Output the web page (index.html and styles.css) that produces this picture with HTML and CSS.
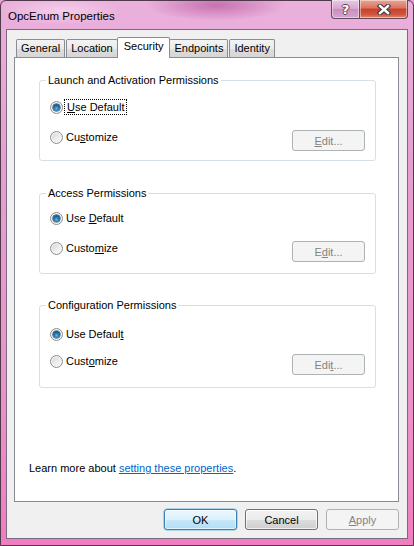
FILE: index.html
```html
<!DOCTYPE html>
<html lang="en">
<head>
<meta charset="UTF-8">
<meta name="viewport" content="width=device-width, initial-scale=1.0">
<title>OpcEnum Properties</title>
<link rel="stylesheet" href="styles.css">
</head>
<body>
<div class="window">
  <div class="titlebar">
    <span class="title">OpcEnum Properties</span>
    <div class="caption-btns">
      <span class="cap-btn help">?</span>
      <span class="cap-btn close">
        <svg width="14" height="11" viewBox="0 0 14 11">
          <path d="M3 2 L11 9 M11 2 L3 9" stroke="#4a3a48" stroke-width="4.6" stroke-linecap="square" fill="none"/>
          <path d="M3 2 L11 9 M11 2 L3 9" stroke="#fff" stroke-width="2.4" stroke-linecap="square" fill="none"/>
        </svg>
      </span>
    </div>
  </div>

  <div class="client">
    <div class="tabs">
      <span class="tab">General</span>
      <span class="tab">Location</span>
      <span class="tab active">Security</span>
      <span class="tab">Endpoints</span>
      <span class="tab">Identity</span>
    </div>

    <div class="panel">
      <fieldset class="group group-launch">
        <legend>Launch and Activation Permissions</legend>
        <div class="row">
          <label class="radio checked"><span class="dot"></span><span class="text focus"><u>U</u>se Default</span></label>
        </div>
        <div class="row">
          <label class="radio"><span class="dot"></span><span class="text">Cu<u>s</u>tomize</span></label>
          <button class="btn edit" disabled><u>E</u>dit...</button>
        </div>
      </fieldset>

      <fieldset class="group group-access">
        <legend>Access Permissions</legend>
        <div class="row">
          <label class="radio checked"><span class="dot"></span><span class="text">Use <u>D</u>efault</span></label>
        </div>
        <div class="row">
          <label class="radio"><span class="dot"></span><span class="text">Custo<u>m</u>ize</span></label>
          <button class="btn edit" disabled>E<u>d</u>it...</button>
        </div>
      </fieldset>

      <fieldset class="group group-config">
        <legend>Configuration Permissions</legend>
        <div class="row">
          <label class="radio checked"><span class="dot"></span><span class="text">Use Defaul<u>t</u></span></label>
        </div>
        <div class="row">
          <label class="radio"><span class="dot"></span><span class="text">Cust<u>o</u>mize</span></label>
          <button class="btn edit" disabled>Edi<u>t</u>...</button>
        </div>
      </fieldset>

      <p class="learn">Learn more about <a href="#">setting these properties</a>.</p>
    </div>

    <div class="actions">
      <button class="btn default">OK</button>
      <button class="btn">Cancel</button>
      <button class="btn" disabled><u>A</u>pply</button>
    </div>
  </div>
</div>
</body>
</html>
```

FILE: styles.css
```css
*{
  margin: 0;
  padding: 0;
  box-sizing: border-box;
}
body{
  background-color: #e99fd3;
  font-family: "Liberation Sans", Arial, sans-serif;
  font-size: 11px;
  color: #000;
}
.window{
  width: 414px;
  height: 546px;
  border: 1px solid #4f3a4c;
  border-radius: 6px 6px 0 0;
  display: flex;
  flex-direction: column;
  background:
    radial-gradient(ellipse 70px 16px at 215px 4px, rgba(170, 60, 140, .55), rgba(170, 60, 140, 0)),
    radial-gradient(ellipse 60px 14px at 60px 10px, rgba(255, 235, 250, .5), rgba(255, 235, 250, 0)),
    linear-gradient(180deg, #eab1dc 0%, #e69ed2 30%, #ea94cc 70%, #f07dc1 100%);
}

/* title bar */
.titlebar{
  height: 28px;
  display: flex;
  justify-content: space-between;
  align-items: flex-start;
}
.title{
  padding: 8px 0 0 7px;
  font-size: 11.5px;
  line-height: 14px;
  color: #000;
}
.caption-btns{
  display: flex;
  margin-right: 5px;
  margin-top: -1px;
}
.cap-btn{
  height: 19px;
  display: flex;
  align-items: center;
  justify-content: center;
  border: 1px solid #5f4a5e;
  border-top: 0;
  box-shadow: inset 0 0 0 1px rgba(255, 255, 255, .45);
}
.help{
  width: 28px;
  border-right: 0;
  border-radius: 0 0 0 4px;
  background: linear-gradient(180deg, #e7c9e2 0%, #d6a6cd 50%, #c98dbf 51%, #d7a5cf 100%);
  color: #fff;
  font: bold 13px "DejaVu Sans", sans-serif;
  text-shadow: -1px 0 #5a4658, 1px 0 #5a4658, 0 -1px #5a4658, 0 1px #5a4658;
}
.close{
  width: 49px;
  border-radius: 0 0 4px 0;
  background: linear-gradient(180deg, #e9a593 0%, #d8735f 45%, #c6412b 50%, #d0553c 80%, #e58a6b 100%);
}

/* client area */
.client{
  flex: 1;
  margin: 0 5px 6px 5px;
  border: 1px solid #7d6a7c;
  background-color: #f0f0f0;
  display: flex;
  flex-direction: column;
  padding-top: 7px;
}
.tabs{
  display: flex;
  height: 20px;
  margin-left: 9px;
  position: relative;
  z-index: 1;
}
.tab{
  margin-top: 2px;
  height: 18px;
  padding: 0 4px;
  line-height: 16px;
  border: 1px solid #898c95;
  border-bottom: 0;
  border-radius: 2px 2px 0 0;
  margin-right: 1px;
  background: linear-gradient(180deg, #f3f3f3 0%, #ebebeb 50%, #dedede 51%, #d6d6d6 100%);
}
.tab.active{
  margin: 0 -1px 0 -2px;
  height: 21px;
  padding: 0 6px;
  line-height: 17px;
  background: #fff;
}
.panel{
  flex: 1;
  margin: 0 8px 0 7px;
  background-color: #fff;
  border: 1px solid #898c95;
  display: flex;
  flex-direction: column;
}

/* group boxes */
.group{
  margin: 15px 22px 0 24px;
  border: 1px solid #d5dfe5;
  border-radius: 3px;
  padding: 12px 10px 9px 10px;
}
.group legend{
  margin-left: -4px;
  padding: 0 2px;
  line-height: 14px;
}
.group-access{
  margin-top: 25px;
  padding-top: 10px;
  padding-bottom: 11px;
}
.group-config{
  margin-top: 24px;
  padding-top: 14px;
  padding-bottom: 12px;
}
.row{
  display: flex;
  justify-content: space-between;
  align-items: flex-start;
}
.row + .row{
  margin-top: 14px;
}
.group-config .row + .row{
  margin-top: 11px;
}
.radio{
  display: flex;
  align-items: center;
  height: 16px;
  gap: 3px;
}
.text{
  line-height: 14px;
}
.dot{
  width: 13px;
  height: 13px;
  border-radius: 50%;
  border: 1px solid #8e8f8f;
  background: linear-gradient(135deg, #d2d2d2 0%, #ebebeb 50%, #fdfdfd 100%);
  box-shadow: inset 0 0 0 1px #f4f4f4;
  display: flex;
  align-items: center;
  justify-content: center;
}
.checked .dot::after{
  content: "";
  width: 7px;
  height: 7px;
  border-radius: 50%;
  background: radial-gradient(circle at 50% 65%, #5fb8e6 0%, #1f6ea8 45%, #0f3d66 100%);
  box-shadow: 0 0 0 0.5px #1d3c58;
}
.focus{
  outline: 1px dotted #000;
  padding: 0 2px;
  margin-left: -1px;
}

/* buttons */
.btn{
  width: 73px;
  height: 21px;
  font: inherit;
  color: #000;
  border: 1px solid #707070;
  border-radius: 3px;
  background: linear-gradient(180deg, #f2f2f2 0%, #ebebeb 50%, #dddddd 51%, #cfcfcf 100%);
  box-shadow: inset 0 0 0 1px rgba(255, 255, 255, .7);
}
.btn:disabled{
  color: #838383;
  border-color: #adb2b5;
  background: #f4f4f4;
  box-shadow: none;
}
.btn.default{
  border-color: #3c7fb1;
  background: linear-gradient(180deg, #ebf7fd 0%, #dcf1fc 50%, #c6e7f9 51%, #b3def5 100%);
  box-shadow: inset 0 0 0 1px rgba(255, 255, 255, .6), 0 0 0 0.5px #65b8e8;
}
.edit{
  margin-top: 1px;
}
.learn{
  margin-top: auto;
  padding: 0 0 26px 14px;
  line-height: 14px;
}
.learn a{
  color: #0066cc;
}
.actions{
  display: flex;
  justify-content: flex-end;
  gap: 8px;
  padding: 7px 8px 8px 0;
}
```
